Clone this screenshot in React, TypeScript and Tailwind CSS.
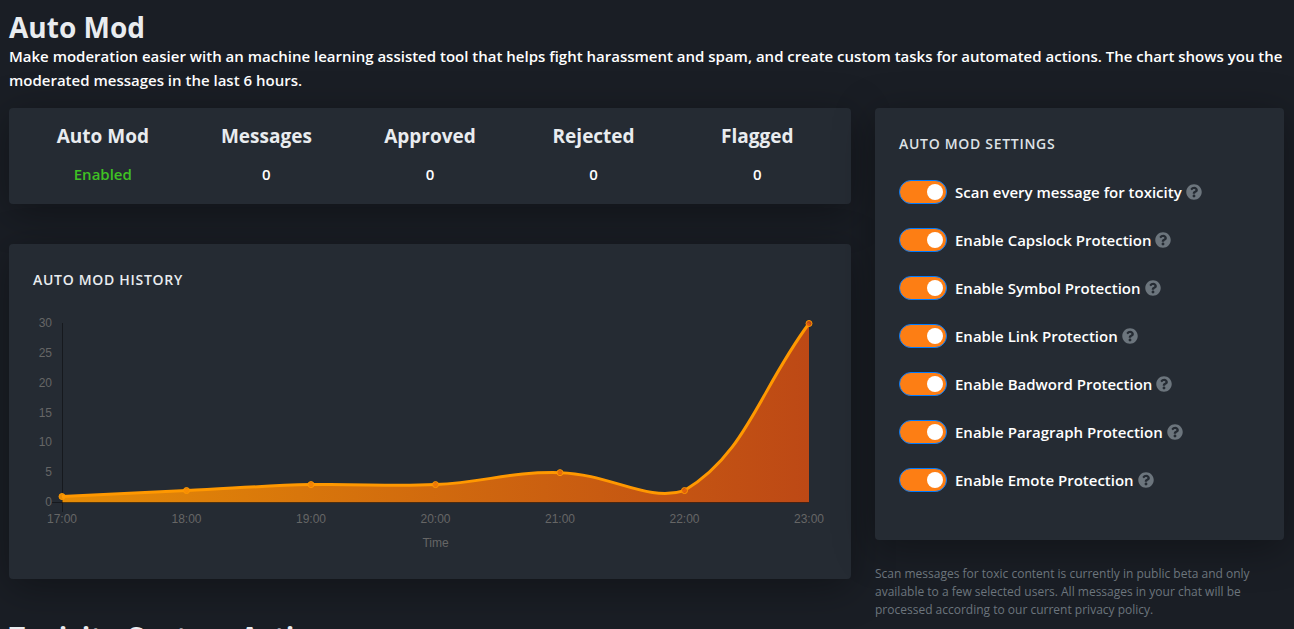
import { useId } from "react";
import { FaQuestionCircle } from "react-icons/fa";

const STATS = [
  { label: "Auto Mod", value: "Enabled", enabled: true },
  { label: "Messages", value: "0" },
  { label: "Approved", value: "0" },
  { label: "Rejected", value: "0" },
  { label: "Flagged", value: "0" },
];

const SETTINGS = [
  "Scan every message for toxicity",
  "Enable Capslock Protection",
  "Enable Symbol Protection",
  "Enable Link Protection",
  "Enable Badword Protection",
  "Enable Paragraph Protection",
  "Enable Emote Protection",
];

const HISTORY = [
  { time: "17:00", count: 1 },
  { time: "18:00", count: 2 },
  { time: "19:00", count: 3 },
  { time: "20:00", count: 3 },
  { time: "21:00", count: 5 },
  { time: "22:00", count: 2 },
  { time: "23:00", count: 30 },
];

const AREA = { left: 29, right: 776, top: 19.5, bottom: 198.5 };
const MAX = 30;
const TENSION = 0.4;

const clampY = (y: number) => Math.min(AREA.bottom, Math.max(AREA.top, y));
const yFor = (v: number) => AREA.bottom - (v / MAX) * (AREA.bottom - AREA.top);

const points = HISTORY.map((h, i) => ({
  x: AREA.left + (i * (AREA.right - AREA.left)) / (HISTORY.length - 1),
  y: yFor(h.count),
}));

const controls = points.map((p, i) => {
  const a = points[i - 1] ?? p;
  const b = points[i + 1] ?? p;
  const d1 = Math.hypot(p.x - a.x, p.y - a.y);
  const d2 = Math.hypot(b.x - p.x, b.y - p.y);
  const f1 = (TENSION * d1) / (d1 + d2);
  const f2 = (TENSION * d2) / (d1 + d2);
  return {
    before: { x: p.x - f1 * (b.x - a.x), y: clampY(p.y - f1 * (b.y - a.y)) },
    after: { x: p.x + f2 * (b.x - a.x), y: clampY(p.y + f2 * (b.y - a.y)) },
  };
});

const line = points
  .map((p, i) => {
    if (i === 0) return `M${p.x},${p.y}`;
    const c1 = controls[i - 1].after;
    const c2 = controls[i].before;
    return `C${c1.x},${c1.y} ${c2.x},${c2.y} ${p.x},${p.y}`;
  })
  .join(" ");

function HistoryChart() {
  const gradient = useId();
  return (
    <svg
      viewBox="0 0 794 251"
      className="block h-auto w-full font-['Liberation_Sans',Arial,sans-serif] text-[12px] font-normal"
      role="img"
      aria-label="Auto Mod History"
    >
      <defs>
        <linearGradient id={gradient} gradientUnits="userSpaceOnUse" x1={AREA.left} y1="0" x2={AREA.right} y2="0">
          <stop offset="0" stopColor="#ff9900" stopOpacity="0.88" />
          <stop offset="1" stopColor="#d84e10" stopOpacity="0.85" />
        </linearGradient>
      </defs>
      <path d={`${line} L${AREA.right},${AREA.bottom} L${AREA.left},${AREA.bottom} Z`} fill={`url(#${gradient})`} />
      <path d="M29.5 19V208M19 198.5H776" stroke="#000" strokeOpacity="0.4" fill="none" />
      <path d={line} fill="none" stroke="#ff9800" strokeWidth="3" />
      {points.map((p, i) => (
        <circle key={HISTORY[i].time} cx={p.x} cy={p.y} r="3" fill={`url(#${gradient})`} stroke="#ff9800" />
      ))}
      <g fill="#666">
        {[30, 25, 20, 15, 10, 5, 0].map((v) => (
          <text key={v} x="19" y={Math.floor(yFor(v)) + 4} textAnchor="end">
            {v}
          </text>
        ))}
        {HISTORY.map((h, i) => (
          <text key={h.time} x={points[i].x} y="219" textAnchor="middle">
            {h.time}
          </text>
        ))}
        <text x={(AREA.left + AREA.right) / 2} y="243" textAnchor="middle">
          Time
        </text>
      </g>
    </svg>
  );
}

function Setting({ label }: { label: string }) {
  const id = useId();
  return (
    <li className="flex h-6 items-center">
      <input
        id={id}
        type="checkbox"
        role="switch"
        defaultChecked
        className="flex h-6 w-12 shrink-0 cursor-pointer appearance-none items-center rounded-full border border-[#adb5bd] bg-[#343a40] px-[3px] before:block before:size-4 before:rounded-full before:bg-white checked:justify-end checked:border-[#007bff] checked:bg-[#fd7e14]"
      />
      <label htmlFor={id} className="ml-2 cursor-pointer text-[15px] leading-6 text-white">
        {label}
      </label>
      <button type="button" aria-label={`About: ${label}`} className="ml-1 text-[#6c757d]">
        <FaQuestionCircle className="size-4" />
      </button>
    </li>
  );
}

const CARD = "rounded bg-[#252b33] shadow-[0_8px_40px_rgba(0,0,0,0.35)]";

export default function App() {
  return (
    <div className="h-screen overflow-hidden bg-[#1a1e25] pr-2.5 pl-[9px] font-['Open_Sans','Noto_Sans',sans-serif] font-semibold text-white">
      <header className="pt-2.5">
        <h1 className="text-[28px] leading-[34px] font-bold text-[#e9ecef]">Auto Mod</h1>
        <p className="text-[15px] leading-6">
          Make moderation easier with an machine learning assisted tool that helps fight harassment and spam, and create
          custom tasks for automated actions. The chart shows you the moderated messages in the last 6 hours.
        </p>
      </header>

      <main className="mt-4 grid grid-cols-12 gap-6">
        <div className="col-span-8">
          <section className={`${CARD} grid h-24 grid-cols-5 px-3 pt-4 text-center`}>
            {STATS.map((s) => (
              <div key={s.label}>
                <h2 className="text-[19px] leading-6 font-bold text-[#e9ecef]">{s.label}</h2>
                <p className={s.enabled ? "mt-3.5 text-[15px] leading-6 text-[#3fc123]" : "mt-3.5 text-[15px] leading-6"}>
                  {s.value}
                </p>
              </div>
            ))}
          </section>

          <section className={`${CARD} mt-10 p-6`}>
            <h2 className="mb-3 text-[14px] leading-6 tracking-wider text-[#e9ecef] uppercase">Auto Mod History</h2>
            <HistoryChart />
          </section>

          <h2 className="mt-[41px] text-[28px] leading-[34px] font-bold text-[#e9ecef]">Toxicity Custom Actions</h2>
        </div>

        <aside className="col-span-4">
          <section className={`${CARD} p-6 pb-12`}>
            <h2 className="text-[14px] leading-6 tracking-wider text-[#dee2e6] uppercase">Auto Mod Settings</h2>
            <ul className="mt-6 flex flex-col gap-6">
              {SETTINGS.map((label) => (
                <Setting key={label} label={label} />
              ))}
            </ul>
          </section>
          <p className="mt-[25px] text-[12px] leading-[18px] font-normal text-[#6c757d]">
            Scan messages for toxic content is currently in public beta and only available to a few selected users. All
            messages in your chat will be processed according to our current privacy policy.
          </p>
        </aside>
      </main>
    </div>
  );
}
